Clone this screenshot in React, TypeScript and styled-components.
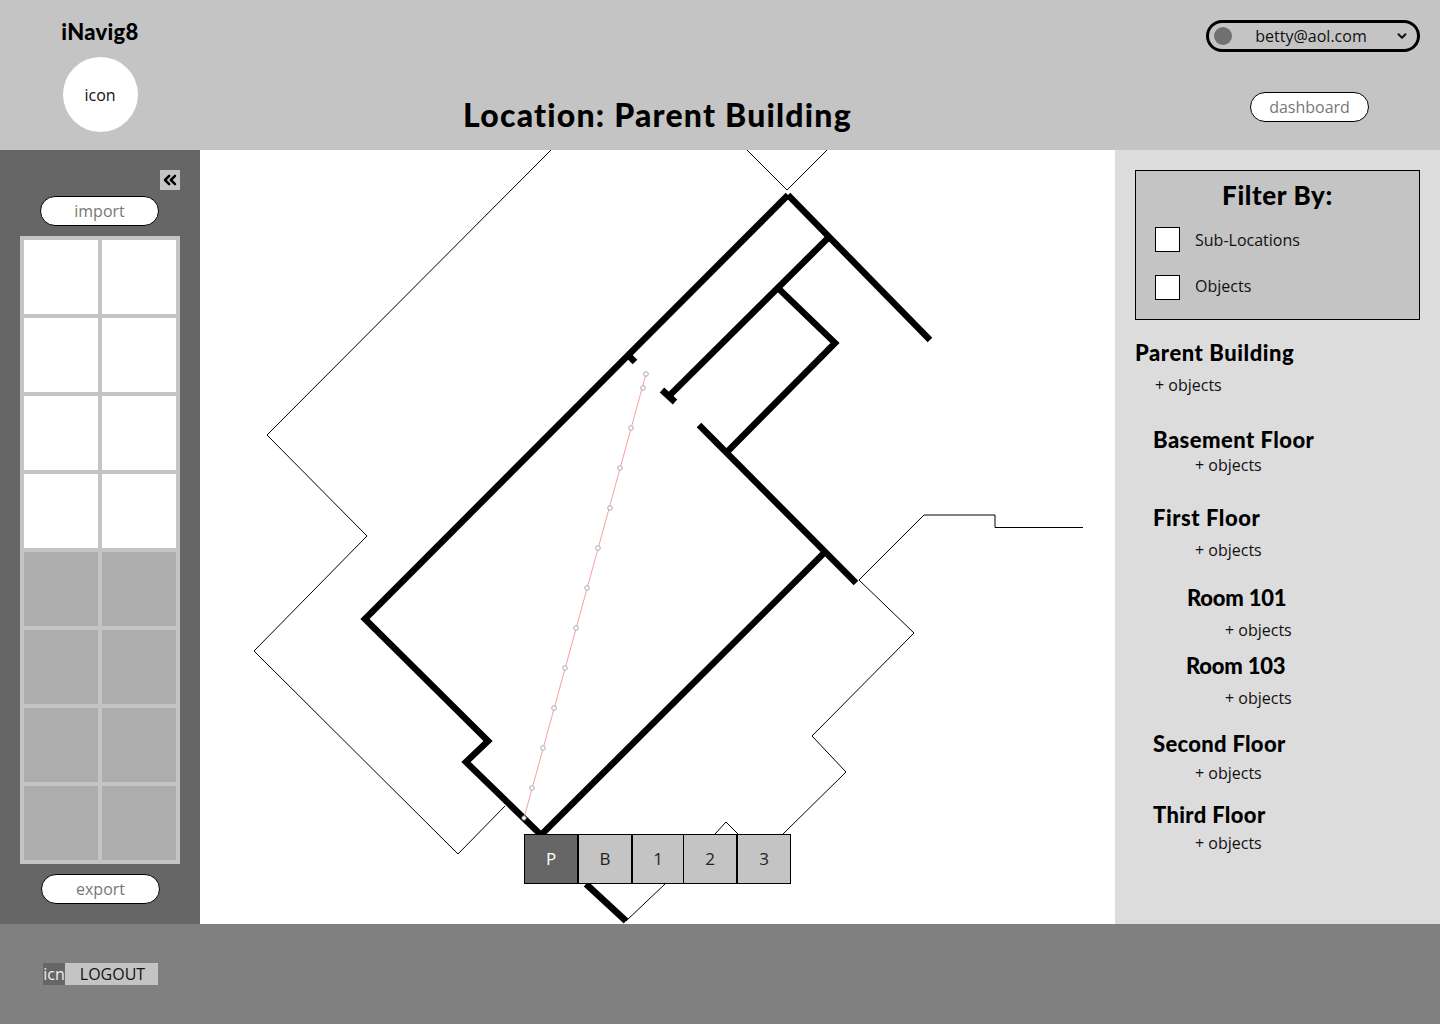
import React from 'react'
import styled, { createGlobalStyle } from 'styled-components'
import { ChevronDown, ChevronsLeft } from 'lucide-react'

const GlobalStyle = createGlobalStyle`
  html, body {
    margin: 0;
    padding: 0;
  }
  body {
    font-family: "Open Sans", "Liberation Sans", sans-serif;
    font-size: 16px;
    color: #111;
  }
`

const Page = styled.div`
  width: 1440px;
  height: 1024px;
  display: grid;
  grid-template-columns: 200px 915px 325px;
  grid-template-rows: 150px 774px 100px;
  overflow: hidden;
`

const headingFont = `"Lato", "Noto Sans", sans-serif`

// header
const Header = styled.header`
  grid-column: 1 / -1;
  display: grid;
  grid-template-columns: 200px 915px 325px;
  background: #c4c4c4;
`

const Brand = styled.div`
  display: flex;
  flex-direction: column;
  align-items: center;
  padding-top: 19px;
`

const BrandName = styled.div`
  font-family: ${headingFont};
  font-weight: 900;
  font-size: 22px;
  line-height: 26px;
  letter-spacing: 0.3px;
  color: #000;
`

const BrandIcon = styled.div`
  width: 75px;
  height: 75px;
  margin-top: 12px;
  border-radius: 50%;
  background: #fff;
  display: flex;
  align-items: center;
  justify-content: center;
`

const PageTitle = styled.h1`
  margin: 0;
  padding-bottom: 14px;
  align-self: end;
  text-align: center;
  font-family: ${headingFont};
  font-weight: 900;
  font-size: 32px;
  line-height: 42px;
  letter-spacing: 1.2px;
  color: #000;
`

const HeaderRight = styled.div`
  display: flex;
  flex-direction: column;
  align-items: flex-end;
  padding: 20px 20px 0 0;
`

const Account = styled.div`
  box-sizing: border-box;
  width: 214px;
  height: 32px;
  border: 3px solid #000;
  border-radius: 16px;
  padding: 0 8px 0 5px;
  display: flex;
  align-items: center;
`

const Avatar = styled.span`
  width: 18px;
  height: 18px;
  border-radius: 50%;
  background: #707070;
`

const Email = styled.span`
  flex: 1;
  text-align: center;
  padding-right: 5px;
`

const PillButton = styled.button`
  box-sizing: border-box;
  width: 119px;
  height: 30px;
  border: 1px solid #000;
  border-radius: 15px;
  background: #fff;
  color: #777;
  font: 16px "Open Sans", sans-serif;
  padding: 0;
`

const DashboardButton = styled(PillButton)`
  margin: 40px 51px 0 0;
`

// left sidebar
const Sidebar = styled.aside`
  background: #666;
  display: flex;
  flex-direction: column;
  align-items: center;
  padding-top: 20px;
`

const CollapseButton = styled.button`
  width: 20px;
  height: 20px;
  padding: 0;
  margin-right: -140px;
  border: 0;
  background: #c4c4c4;
  color: #000;
  display: flex;
  align-items: center;
  justify-content: center;
`

const ImportButton = styled(PillButton)`
  margin: 6px 1px 10px 0;
`

const ExportButton = styled(PillButton)`
  margin: 10px 0 0 1px;
`

const Thumbs = styled.div`
  box-sizing: border-box;
  width: 160px;
  height: 628px;
  display: grid;
  grid-template-columns: repeat(2, 74px);
  grid-auto-rows: 74px;
  gap: 4px;
  border: 4px solid #c4c4c4;
  background: #c4c4c4;
`

const Thumb = styled.div<{ $empty?: boolean }>`
  background: ${p => (p.$empty ? '#adadad' : '#fff')};
`

// map
const MapArea = styled.main`
  position: relative;
  background: #fff;
  overflow: hidden;
`

const FloorPlan = styled.svg`
  display: block;
  width: 915px;
  height: 774px;
`

const FloorBar = styled.div`
  position: absolute;
  left: 324px;
  top: 684px;
  height: 50px;
  box-sizing: border-box;
  display: flex;
  border: 1px solid #000;
`

const FloorTab = styled.button<{ $active?: boolean; $width: number; $divider: number }>`
  box-sizing: border-box;
  width: ${p => p.$width}px;
  padding: 0 0 2px;
  border: 0;
  border-left: ${p => p.$divider}px solid #000;
  background: ${p => (p.$active ? '#666' : '#c4c4c4')};
  color: ${p => (p.$active ? '#fff' : '#222')};
  font: 17px "Open Sans", sans-serif;
`

// right panel
const RightPanel = styled.aside`
  background: #dcdcdc;
  padding: 20px 20px 0;
`

const FilterBox = styled.section`
  box-sizing: border-box;
  height: 150px;
  border: 1px solid #000;
  background: #c4c4c4;
  padding: 7px 19px 0;
`

const FilterTitle = styled.h2`
  margin: 0 0 15px;
  text-align: center;
  font-family: ${headingFont};
  font-weight: 900;
  font-size: 26px;
  line-height: 34px;
  letter-spacing: 0.6px;
  color: #000;
`

const FilterRow = styled.label`
  display: flex;
  align-items: center;
  gap: 15px;
  height: 25px;
  margin-bottom: 21px;
`

const Checkbox = styled.span<{ $drop?: number }>`
  box-sizing: border-box;
  width: 25px;
  height: 25px;
  margin-top: ${p => p.$drop ?? 0}px;
  border: 1px solid #000;
  background: #fff;
`

const Tree = styled.div`
  display: flex;
  flex-direction: column;
`

const TreeTitle = styled.div<{ $indent: number; $top: number; $spacing: number }>`
  margin: ${p => p.$top}px 0 0 ${p => p.$indent}px;
  font-family: ${headingFont};
  font-weight: 900;
  font-size: 22px;
  line-height: 28px;
  letter-spacing: ${p => p.$spacing}px;
  color: #000;
`

const TreeObjects = styled.div<{ $indent: number; $top: number }>`
  margin: ${p => p.$top}px 0 0 ${p => p.$indent}px;
  line-height: 22px;
`

// footer
const Footer = styled.footer`
  grid-column: 1 / -1;
  background: #808080;
  display: flex;
  align-items: center;
  padding-left: 43px;
`

const LogoutIcon = styled.span`
  width: 22px;
  height: 22px;
  background: #666;
  color: #eee;
  line-height: 22px;
  text-align: center;
`

const LogoutLabel = styled.span`
  box-sizing: border-box;
  width: 93px;
  height: 22px;
  padding-left: 2px;
  background: #c4c4c4;
  line-height: 22px;
  text-align: center;
`

const tree = [
  { name: 'Parent Building', indent: 0, top: 19, spacing: 0.55, objIndent: 20, objTop: 7 },
  { name: 'Basement Floor', indent: 18, top: 30, spacing: 0.45, objIndent: 60, objTop: 0 },
  { name: 'First Floor', indent: 18, top: 28, spacing: 0.55, objIndent: 60, objTop: 7 },
  { name: 'Room 101', indent: 52, top: 23, spacing: -0.2, objIndent: 90, objTop: 7 },
  { name: 'Room 103', indent: 51, top: 11, spacing: -0.2, objIndent: 90, objTop: 7 },
  { name: 'Second Floor', indent: 18, top: 21, spacing: 0.3, objIndent: 60, objTop: 4 },
  { name: 'Third Floor', indent: 18, top: 17, spacing: 0.35, objIndent: 60, objTop: 3 },
]

const floors = [
  { label: 'P', width: 52, divider: 0, active: true },
  { label: 'B', width: 54, divider: 2 },
  { label: '1', width: 52, divider: 2 },
  { label: '2', width: 53, divider: 1 },
  { label: '3', width: 54, divider: 2 },
]

const thinLines = [
  '551,150 267,435 367,536 254,651 458,854 505,806',
  '747,150 787,190 827,150',
  '1083,527.5 995,527.5 995,515 924,515 859,580 914,633 812,736 846,772 783,834',
  '715,834 726,822 738,834',
  '626,921 665,884',
]

const thickLines = [
  '788,195 365,619 488,741 466,762 541,835 825,552',
  '788,195 930,340',
  '828,238 669,396',
  '662,390 675,402',
  '779,289 835,343 727,452',
  '699,425 856,583',
  '628,355 635,362',
  '586,884 626,921',
]

const routeDots = [
  [646, 374], [643, 388], [631, 428], [620, 468], [610, 508], [598, 548], [587, 588],
  [576, 628], [565, 668], [554, 708], [543, 748], [532, 788],
]

const App: React.FC = () => {
  return (
    <Page>
      <GlobalStyle />
      <Header>
        <Brand>
          <BrandName>iNavig8</BrandName>
          <BrandIcon>icon</BrandIcon>
        </Brand>
        <PageTitle>Location: Parent Building</PageTitle>
        <HeaderRight>
          <Account>
            <Avatar />
            <Email>betty@aol.com</Email>
            <ChevronDown size={14} strokeWidth={3.5} />
          </Account>
          <DashboardButton>dashboard</DashboardButton>
        </HeaderRight>
      </Header>

      <Sidebar>
        <CollapseButton>
          <ChevronsLeft size={22} strokeWidth={3} />
        </CollapseButton>
        <ImportButton>import</ImportButton>
        <Thumbs>
          {Array.from({ length: 16 }, (_, i) => (
            <Thumb key={i} $empty={i >= 8} />
          ))}
        </Thumbs>
        <ExportButton>export</ExportButton>
      </Sidebar>

      <MapArea>
        <FloorPlan viewBox="200 150 915 774">
          {thinLines.map(points => (
            <polyline key={points} points={points} fill="none" stroke="#000" strokeWidth={1} />
          ))}
          {thickLines.map(points => (
            <polyline key={points} points={points} fill="none" stroke="#000" strokeWidth={6.5} />
          ))}
          <line x1={646} y1={374} x2={524} y2={818} stroke="#f6a0a0" strokeWidth={1} />
          {routeDots.map(([x, y]) => (
            <circle key={x} cx={x} cy={y} r={2.3} fill="#fff" stroke="#aaa" strokeWidth={1} />
          ))}
          <circle cx={524} cy={818} r={2.3} fill="#fff" stroke="#666" strokeWidth={1} />
        </FloorPlan>
        <FloorBar>
          {floors.map(f => (
            <FloorTab key={f.label} $width={f.width} $divider={f.divider} $active={f.active}>
              {f.label}
            </FloorTab>
          ))}
        </FloorBar>
      </MapArea>

      <RightPanel>
        <FilterBox>
          <FilterTitle>Filter By:</FilterTitle>
          <FilterRow>
            <Checkbox />
            Sub-Locations
          </FilterRow>
          <FilterRow>
            <Checkbox $drop={4} />
            Objects
          </FilterRow>
        </FilterBox>
        <Tree>
          {tree.map(item => (
            <React.Fragment key={item.name}>
              <TreeTitle $indent={item.indent} $top={item.top} $spacing={item.spacing}>{item.name}</TreeTitle>
              <TreeObjects $indent={item.objIndent} $top={item.objTop}>+ objects</TreeObjects>
            </React.Fragment>
          ))}
        </Tree>
      </RightPanel>

      <Footer>
        <LogoutIcon>icn</LogoutIcon>
        <LogoutLabel>LOGOUT</LogoutLabel>
      </Footer>
    </Page>
  )
}

export default App
